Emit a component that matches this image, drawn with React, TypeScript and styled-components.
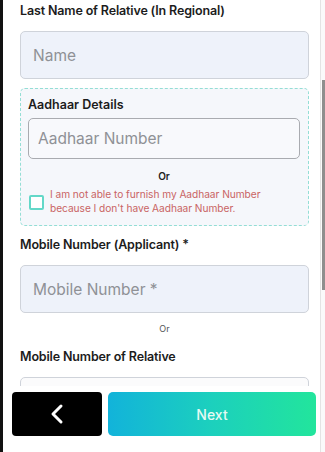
import styled, { createGlobalStyle } from "styled-components";

const GlobalStyle = createGlobalStyle`
  html, body {
    margin: 0;
    padding: 0;
    background: #ffffff;
  }

  body {
    width: 325px;
    height: 452px;
    overflow: hidden;
    font-family: Inter, "Noto Sans", sans-serif;
  }

  * {
    box-sizing: border-box;
  }
`;

export default function App() {
  return (
    <>
      <GlobalStyle />
      <Screen>
        <LeftEdge />
        <Main>
          <Form>
            <Label>Last Name of Relative (In Regional)</Label>
            <Input placeholder="Name" />

            <AadhaarBox>
              <BoxLabel>Aadhaar Details</BoxLabel>
              <Input placeholder="Aadhaar Number" $inner />
              <Or>Or</Or>
              <CheckRow>
                <CheckBox type="checkbox" />
                <CheckText>
                  I am not able to furnish my Aadhaar Number
                  <br />
                  because I don't have Aadhaar Number.
                </CheckText>
              </CheckRow>
            </AadhaarBox>

            <Label $top={10}>Mobile Number (Applicant) *</Label>
            <Input placeholder="Mobile Number *" />
            <Or $small>Or</Or>
            <Label $top={6}>Mobile Number of Relative</Label>
            <Input $plain />
          </Form>

          <BottomBar>
            <BackButton>
              <svg width="16" height="22" viewBox="0 0 16 22" fill="none">
                <path
                  d="M12 3 L4 11 L12 19"
                  stroke="#ffffff"
                  strokeWidth="3"
                  strokeLinecap="round"
                  strokeLinejoin="round"
                />
              </svg>
            </BackButton>
            <NextButton>Next</NextButton>
          </BottomBar>
        </Main>
        <ScrollTrack>
          <ScrollThumb />
        </ScrollTrack>
      </Screen>
    </>
  );
}

const Screen = styled.div`
  display: flex;
  flex-direction: row;

  width: 325px;
  height: 452px;

  background: #ffffff;
`;

const LeftEdge = styled.div`
  width: 3px;
  height: 100%;

  background: #111111;
`;

const Main = styled.div`
  position: relative;

  flex: 1;
  height: 100%;

  overflow: hidden;
`;

const Form = styled.div`
  display: flex;
  flex-direction: column;

  width: 289px;
  margin-left: 17px;
  padding-top: 2px;
`;

const Label = styled.div<{ $top?: number }>`
  margin-top: ${(p) => p.$top ?? 0}px;
  margin-bottom: 11px;

  color: #1c1c1c;

  font-size: 12.5px;
  font-weight: 600;
  line-height: 18px;
  letter-spacing: -0.15px;
`;

const Input = styled.input<{ $inner?: boolean; $plain?: boolean }>`
  width: 100%;
  height: ${(p) => (p.$inner ? 41 : 48)}px;

  padding: 0 ${(p) => (p.$inner ? 9 : 12)}px;

  border: 1px solid ${(p) => (p.$inner ? "#a9abb0" : "#cfd3da")};
  border-radius: 5px;

  background: ${(p) =>
    p.$inner ? "#f8f9fc" : p.$plain ? "#fbfbfc" : "#eef2fa"};

  font-family: Inter, "Noto Sans", sans-serif;
  font-size: 15.5px;
  font-weight: 400;

  outline: none;

  &::placeholder {
    color: #8f9196;
  }
`;

const AadhaarBox = styled.div`
  display: flex;
  flex-direction: column;

  margin-top: 9px;
  padding: 8px 8px 7px 7px;

  height: 138px;

  border: 1.5px dashed #94ded5;
  border-radius: 5px;

  background: #f5f7fb;
`;

const BoxLabel = styled.div`
  margin-bottom: 5px;

  color: #1c1c1c;

  font-size: 12.5px;
  font-weight: 600;
  line-height: 16px;
`;

const Or = styled.div<{ $small?: boolean }>`
  margin: ${(p) => (p.$small ? "10px 0 7px" : "11px 0 5px")};

  text-align: center;

  color: ${(p) => (p.$small ? "#555555" : "#222222")};

  font-size: ${(p) => (p.$small ? 9 : 10)}px;
  font-weight: ${(p) => (p.$small ? 400 : 600)};
  line-height: 12px;
`;

const CheckRow = styled.div`
  display: flex;
  flex-direction: row;
  align-items: center;

  gap: 6px;
`;

const CheckBox = styled.input`
  appearance: none;

  flex-shrink: 0;

  width: 15px;
  height: 15px;
  margin: 2px 0 0 1px;

  border: 2px solid #63d8c8;
  border-radius: 2px;

  background: #ffffff;
`;

const CheckText = styled.div`
  color: #c96464;

  font-size: 10.2px;
  font-weight: 400;
  line-height: 14px;
  letter-spacing: -0.05px;
`;

const BottomBar = styled.div`
  position: absolute;
  left: 0;
  right: 0;
  top: 386px;
  bottom: 0;

  display: flex;
  flex-direction: row;

  gap: 6px;

  padding: 6px 0 0 9px;

  background: #ffffff;
`;

const BackButton = styled.div`
  display: flex;
  align-items: center;
  justify-content: center;

  width: 90px;
  height: 44px;

  border-radius: 4px;

  background: #000000;
`;

const NextButton = styled.div`
  display: flex;
  align-items: center;
  justify-content: center;

  width: 208px;
  height: 44px;

  border-radius: 5px;

  background: linear-gradient(90deg, #12b3da 0%, #1cd0bd 50%, #22e59c 100%);

  color: #e6faf3;

  font-size: 14px;
  font-weight: 500;
`;

const ScrollTrack = styled.div`
  position: relative;

  width: 5px;
  height: 100%;

  border-left: 1px solid #e4e4e4;

  background: #fafafa;
`;

const ScrollThumb = styled.div`
  margin-top: 80px;
  margin-left: 1px;

  width: 3px;
  height: 210px;

  background: #8e8e8e;
`;
